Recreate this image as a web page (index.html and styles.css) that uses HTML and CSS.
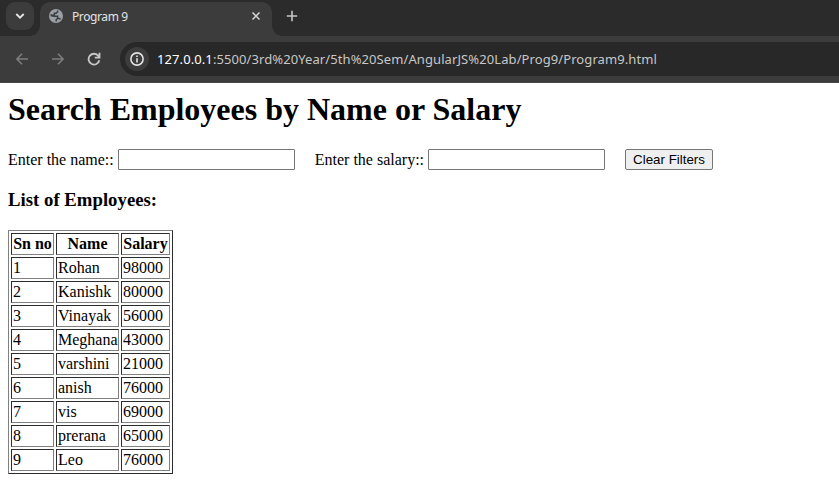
FILE: index.html
```html
<!DOCTYPE html>
<html lang="en">
<head>
<meta charset="utf-8">
<title>Program 9</title>
<link rel="stylesheet" href="styles.css">
</head>
<body>
<header class="browser">
  <div class="tabstrip">
    <div class="tab-search">
      <svg width="28" height="28" viewBox="0 0 28 28"><path d="M10.3 12l3.7 3.7 3.7-3.7" fill="none" stroke="#e3e3e3" stroke-width="1.9"/></svg>
    </div>
    <div class="tab">
      <svg class="globe" width="14" height="14" viewBox="0 0 14 14"><circle cx="7" cy="7" r="7" fill="#9aa0a6"/><path d="M8.600 1.500V3L7 4.300H5.400V6.200H3.200L1.500 5.800M1.700 6.600L5 7.200H8.600V9.400H10.400L11.600 10.300M8.500 9.500L7.200 10.600V12.400" fill="none" stroke="#3c3c3c" stroke-width="1.500"/></svg>
      <span class="tab-title">Program 9</span>
      <svg class="close" width="10" height="10" viewBox="0 0 10 10"><path d="M1.500 1.500l7 7M8.500 1.500l-7 7" stroke="#d5d5d5" stroke-width="1.500"/></svg>
    </div>
    <svg class="new-tab" width="12" height="12" viewBox="0 0 12 12"><path d="M6 .8v10.400M.8 6h10.400" stroke="#c7c7c7" stroke-width="1.600"/></svg>
  </div>
  <div class="toolbar">
    <div class="nav">
      <svg width="14" height="14" viewBox="0 0 14 14"><path d="M13 7H2.200M7 1.800L1.900 7 7 12.200" fill="none" stroke="#7d7d7d" stroke-width="1.600"/></svg>
      <svg width="14" height="14" viewBox="0 0 14 14"><path d="M1 7h10.800M7 1.800L12.100 7 7 12.200" fill="none" stroke="#7d7d7d" stroke-width="1.600"/></svg>
      <svg width="14" height="14" viewBox="0 0 14 14"><path d="M12.300 8.200A5.400 5.400 0 1 1 11.400 4l1 1.200M12.500.8v4.800H7.800" fill="none" stroke="#c7c7c7" stroke-width="1.800"/></svg>
    </div>
    <div class="address">
      <span class="site-info">
        <svg width="14" height="14" viewBox="0 0 14 14"><circle cx="7" cy="7" r="6.100" fill="none" stroke="#e3e3e3" stroke-width="1.600"/><path d="M7 6.200v4.300M7 3.400v1.700" stroke="#e3e3e3" stroke-width="1.600"/></svg>
      </span>
      <span class="url"><span class="host">127.0.0.1</span><span class="path">:5500/3rd%20Year/5th%20Sem/AngularJS%20Lab/Prog9/Program9.html</span></span>
    </div>
  </div>
</header>
<main>
  <h1>Search Employees by Name or Salary</h1>
  <form class="filters">
    <label>Enter the name:: <input type="text"></label>
    <label>Enter the salary:: <input type="text"></label>
    <button type="button">Clear Filters</button>
  </form>
  <h3>List of Employees:</h3>
  <table border="1">
    <colgroup><col class="sn"><col class="name"><col class="salary"></colgroup>
    <thead><tr><th>Sn no</th><th>Name</th><th>Salary</th></tr></thead>
    <tbody>
      <tr><td>1</td><td>Rohan</td><td>98000</td></tr>
      <tr><td>2</td><td>Kanishk</td><td>80000</td></tr>
      <tr><td>3</td><td>Vinayak</td><td>56000</td></tr>
      <tr><td>4</td><td>Meghana</td><td>43000</td></tr>
      <tr><td>5</td><td>varshini</td><td>21000</td></tr>
      <tr><td>6</td><td>anish</td><td>76000</td></tr>
      <tr><td>7</td><td>vis</td><td>69000</td></tr>
      <tr><td>8</td><td>prerana</td><td>65000</td></tr>
      <tr><td>9</td><td>Leo</td><td>76000</td></tr>
    </tbody>
  </table>
</main>
</body>
</html>
```

FILE: styles.css
```css
* { box-sizing: border-box; }
body {
  margin: 0;
  background: #fff;
  color: #000;
  font-family: "Liberation Serif", "Times New Roman", serif;
  font-size: 16px;
  overflow: hidden;
}
svg { display: block; flex: none; }

.browser { font-family: "Noto Sans", "Open Sans", sans-serif; }
.tabstrip {
  display: flex;
  height: 36px;
  padding: 2px 0 0 6px;
  background: #2b2b2b;
}
.tab-search {
  width: 28px;
  height: 28px;
  border-radius: 9px;
  background: #3c3c3c;
}
.tab {
  position: relative;
  display: flex;
  align-items: center;
  width: 232px;
  height: 34px;
  margin-left: 6px;
  padding: 0 11px 6px 9px;
  border-radius: 10px 10px 0 0;
  background: #3c3c3c;
}
/* concave corners where the tab meets the toolbar */
.tab::before,
.tab::after {
  content: "";
  position: absolute;
  bottom: 0;
  width: 10px;
  height: 10px;
}
.tab::before {
  right: 100%;
  background: radial-gradient(circle at 0 0, transparent 9.5px, #3c3c3c 10px);
}
.tab::after {
  left: 100%;
  background: radial-gradient(circle at 100% 0, transparent 9.5px, #3c3c3c 10px);
}
.tab-title {
  margin-left: 9px;
  padding-top: 2px;
  font-size: 12px;
  line-height: 16px;
  color: #e3e3e3;
  letter-spacing: -0.4px;
}
.close { margin-left: auto; }
.new-tab { margin: 8px 0 0 14px; }

.toolbar {
  display: flex;
  align-items: center;
  height: 47px;
  background: #3c3c3c;
  border-bottom: 1px solid #474747;
}
.nav {
  display: flex;
  gap: 22px;
  width: 120px;
  padding-left: 15px;
}
.address {
  display: flex;
  align-items: center;
  flex: 1;
  height: 34px;
  padding-left: 5px;
  border-radius: 17px 0 0 17px;
  background: #282828;
}
.site-info {
  display: flex;
  align-items: center;
  justify-content: center;
  width: 24px;
  height: 24px;
  border-radius: 50%;
  background: #3c3c3c;
}
.url {
  margin-left: 8px;
  font-size: 13px;
  line-height: 20px;
  letter-spacing: 0.09px;
  white-space: nowrap;
  color: #c7c7c7;
}
.host { color: #fff; }

main { padding: 8px 8px 0; }
h1 {
  margin: 0 0 21px;
  font-size: 32px;
  line-height: 37px;
}
.filters {
  display: flex;
  gap: 20px;
  height: 21px;
}
label {
  display: flex;
  gap: 4px;
  line-height: 21px;
  white-space: nowrap;
}
input {
  width: 177px;
  height: 21px;
  padding: 1px 2px;
  border: 1px solid #767676;
  border-radius: 1px;
  background: #fff;
}
button {
  width: 88px;
  height: 21px;
  padding: 0;
  border: 1px solid #767676;
  border-radius: 2px;
  background: #efefef;
  color: #000;
  font: 13.333px "Liberation Sans", Arial, sans-serif;
}
h3 {
  margin: 19px 0;
  font-size: 18.72px;
  line-height: 22px;
  letter-spacing: 0.03px;
}
table {
  width: 165px;
  table-layout: fixed;
  border: 1px outset #808080;
  border-spacing: 2px;
}
.sn { width: 43px; }
.name { width: 63px; }
.salary { width: 49px; }
th, td {
  height: 22px;
  padding: 1px;
  border: 1px inset #808080;
  line-height: 18px;
  white-space: nowrap;
}
```
